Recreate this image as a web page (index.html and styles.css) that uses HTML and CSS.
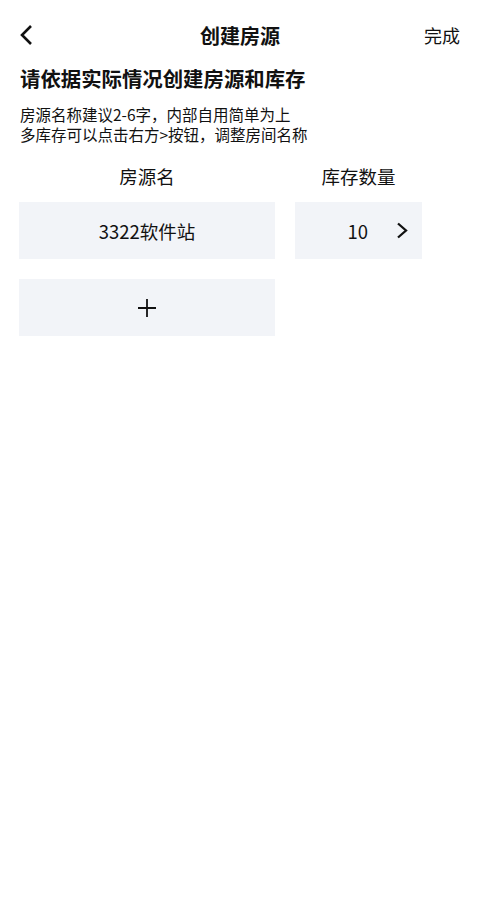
FILE: index.html
```html
<!DOCTYPE html>
<html lang="zh-CN">
<head>
<meta charset="utf-8">
<title>创建房源</title>
<link rel="stylesheet" href="styles.css">
</head>
<body>
<div class="page">
  <header class="nav">
    <span class="back">
      <svg width="14" height="22" viewBox="0 0 14 22"><path d="M12 2 L3 11 L12 20" fill="none" stroke="#111" stroke-width="2.6" stroke-linejoin="miter"/></svg>
    </span>
    <h1 class="nav-title">创建房源</h1>
    <span class="done">完成</span>
  </header>
  <h2 class="heading">请依据实际情况创建房源和库存</h2>
  <p class="desc">房源名称建议2-6字，内部自用简单为上<br>多库存可以点击右方&gt;按钮，调整房间名称</p>
  <div class="table">
    <div class="col-head">房源名</div>
    <div class="col-head">库存数量</div>
    <div class="cell name">3322软件站</div>
    <div class="cell stock"><span class="num">10</span>
      <svg class="arrow" width="13" height="17" viewBox="0 0 13 17"><path d="M2 1.5 L10 8.5 L2 15.5" fill="none" stroke="#111" stroke-width="2.3"/></svg>
    </div>
    <div class="cell add">
      <svg width="18" height="18" viewBox="0 0 18 18"><path d="M9 0 V18 M0 9 H18" stroke="#111" stroke-width="1.8"/></svg>
    </div>
  </div>
</div>
</body>
</html>
```
FILE: styles.css
```css
* { box-sizing: border-box; }
html, body { margin: 0; padding: 0; background: #fff; }
body {
  font-family: "Noto Sans CJK SC", "Noto Sans", sans-serif;
  color: #111;
}
.page { padding: 0 19px; }
.nav {
  position: relative;
  height: 64px;
  padding-top: 6px;
  display: flex;
  align-items: center;
  justify-content: space-between;
}
.back { display: flex; width: 14px; height: 22px; }
.nav-title {
  position: absolute;
  left: 0; right: 0;
  top: 6px; bottom: 0;
  margin: 0;
  display: flex;
  align-items: center;
  justify-content: center;
  font-size: 20px;
  font-weight: 700;
  pointer-events: none;
}
.done { font-size: 18px; margin-right: 1px; }
.heading {
  margin: 0;
  padding-left: 1px;
  font-size: 20.4px;
  line-height: 28px;
  font-weight: 700;
}
.desc {
  margin: 12px 0 0;
  padding-left: 1px;
  font-size: 15.5px;
  line-height: 20px;
}
.table {
  margin-top: 20px;
  display: grid;
  grid-template-columns: 256px 127px;
  column-gap: 20px;
  row-gap: 20px;
}
.col-head {
  font-size: 18.5px;
  line-height: 24px;
  text-align: center;
  margin-bottom: -6px;
}
.cell {
  height: 57px;
  background: #f2f4f8;
  display: flex;
  align-items: center;
  justify-content: center;
  font-size: 18.5px;
}
.stock { justify-content: flex-end; padding-right: 13px; }
.stock .num { margin-right: 28px; }
.add { grid-column: 1; }
```
